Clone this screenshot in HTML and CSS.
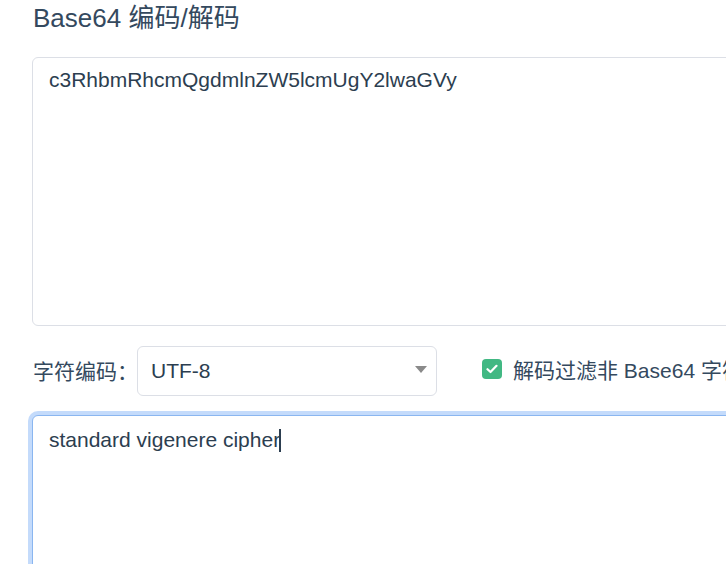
FILE: index.html
```html
<!DOCTYPE html>
<html lang="zh-CN">
<head>
<meta charset="utf-8">
<title>Base64 编码/解码</title>
<link rel="stylesheet" href="styles.css">
</head>
<body>
<main class="page">
  <h1 class="title">Base64 编码/解码</h1>
  <div class="textbox textbox-input" role="textbox">c3RhbmRhcmQgdmlnZW5lcmUgY2lwaGVy</div>
  <div class="options">
    <span class="label">字符编码：</span>
    <div class="select">
      <span class="select-value">UTF-8</span>
      <svg class="select-arrow" width="12" height="7" viewBox="0 0 12 7"><path d="M0 0H12L6 7Z" fill="#8a8a8a"/></svg>
    </div>
    <label class="check">
      <span class="check-box"><svg width="12" height="10" viewBox="0 0 12 10"><path d="M1.5 5.2L4.5 8L10.5 1.8" fill="none" stroke="#fff" stroke-width="2.2" stroke-linecap="round" stroke-linejoin="round"/></svg></span>
      <span class="check-text">解码过滤非 Base64 字符</span>
    </label>
  </div>
  <div class="textbox textbox-output is-focused" role="textbox">standard vigenere cipher<span class="caret"></span></div>
</main>
</body>
</html>
```
FILE: styles.css
```css
html, body {
  margin: 0;
  background: #fff;
  overflow: hidden;
}
body {
  font-family: "Liberation Sans", Arial, "Noto Sans CJK SC", sans-serif;
  color: #34495e;
}
.page {
  width: 820px;
  padding: 0 0 0 32px;
}
.title {
  margin: 0 0 20px 1px;
  font-size: 26px;
  font-weight: normal;
  line-height: 37px;
  height: 37px;
}
.textbox {
  box-sizing: border-box;
  width: 760px;
  border: 1px solid #dcdfe6;
  border-radius: 6px;
  padding: 6px 16px;
  font-size: 21px;
  line-height: 31px;
  color: #2c3e50;
  background: #fff;
}
.textbox-input {
  height: 269px;
}
.textbox-output {
  margin-top: 19px;
  height: 200px;
  padding-top: 8px;
}
.is-focused {
  border-color: #8ab6f0;
  box-shadow: 0 0 0 4px #c4dbfb;
}
.caret {
  display: inline-block;
  width: 2px;
  height: 23px;
  background: #2c3e50;
  vertical-align: -5px;
  margin-left: -1px;
}
.options {
  display: flex;
  align-items: center;
  margin-top: 20px;
  height: 50px;
  font-size: 21px;
}
.label {
  margin-left: 1px;
  width: 104px;
  white-space: nowrap;
  margin-top: -3px;
}
.select {
  box-sizing: border-box;
  width: 300px;
  height: 50px;
  border: 1px solid #dcdfe6;
  border-radius: 6px;
  display: flex;
  align-items: center;
  justify-content: space-between;
  padding: 0 9px 0 13px;
  color: #2c3e50;
}
.select-value {
  margin-top: -1px;
}
.select-arrow {
  margin-top: -4px;
}
.check {
  display: flex;
  align-items: center;
  margin-left: 45px;
  white-space: nowrap;
}
.check-box {
  width: 20px;
  height: 20px;
  border-radius: 4px;
  background: #41b883;
  display: flex;
  align-items: center;
  justify-content: center;
  margin-top: -4px;
}
.check-text {
  margin-left: 11px;
  margin-top: -5px;
}
```
